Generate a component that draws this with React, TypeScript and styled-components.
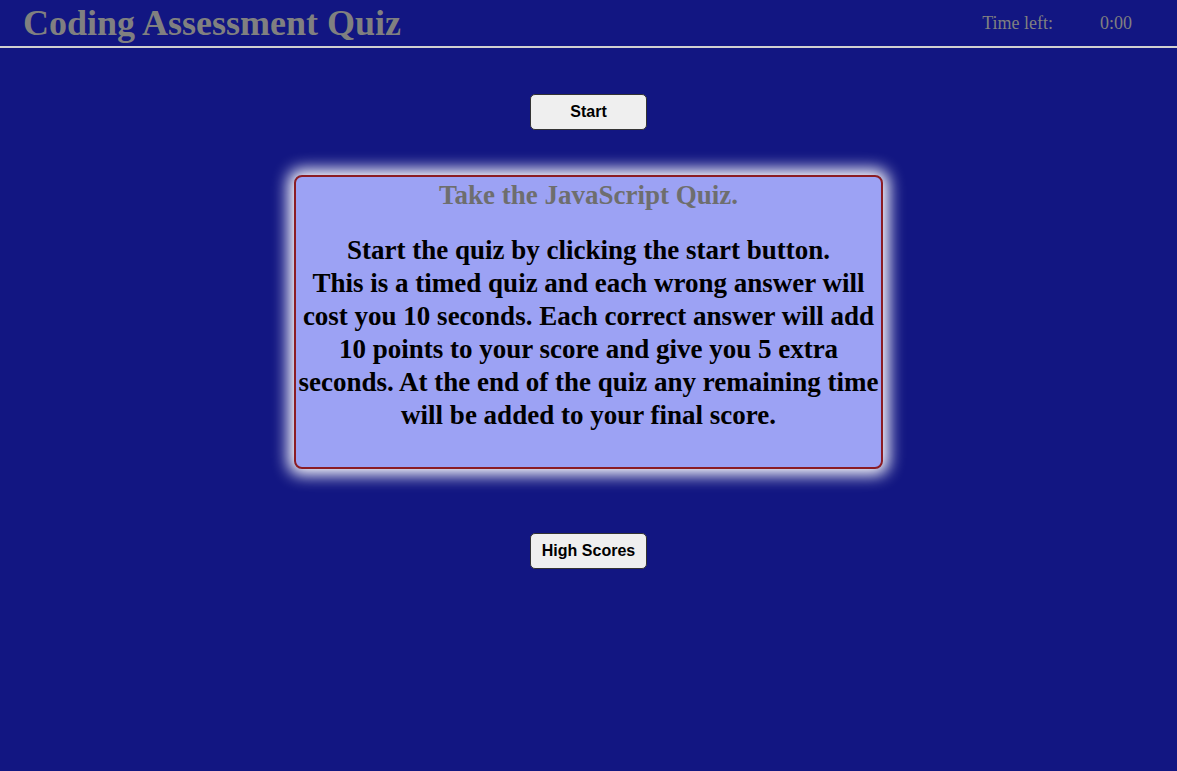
import React from "react";
import styled, { createGlobalStyle } from "styled-components";

const Global = createGlobalStyle`
  html, body { margin: 0; padding: 0; background: #121682; }
  body { font-family: "Liberation Serif", "Times New Roman", serif; }
`;

const Page = styled.div`
  min-height: 771px;
  background: #121682;
  display: flex;
  flex-direction: column;
`;

const Header = styled.header`
  height: 46px;
  display: flex;
  align-items: center;
  justify-content: space-between;
  padding: 0 45px 0 23px;
  border-bottom: 2px solid #d0d0d0;
`;

const Title = styled.h1`
  margin: 0;
  font-family: "Liberation Serif", serif;
  font-size: 36px;
  font-weight: bold;
  color: #808080;
  line-height: 46px;
`;

const Timer = styled.div`
  display: flex;
  gap: 47px;
  color: #808080;
  font-size: 18px;
  font-family: "Liberation Serif", serif;
`;

const Main = styled.main`
  display: flex;
  flex-direction: column;
  align-items: center;
`;

const Button = styled.button<{ $top: number }>`
  margin-top: ${(p) => p.$top}px;
  width: 117px;
  height: 36px;
  background: #efefef;
  border: 1px solid #333;
  border-radius: 5px;
  font-family: "Liberation Sans", Arial, sans-serif;
  font-weight: bold;
  font-size: 16px;
  color: #000;
`;

const Card = styled.section`
  margin-top: 45px;
  box-sizing: border-box;
  width: 589px;
  height: 294px;
  background: #9ca2f4;
  border: 2px solid #8b1c24;
  border-radius: 8px;
  box-shadow: 0 0 16px 6px #ffffff;
  text-align: center;
  padding: 2px 2px 0;
`;

const CardTitle = styled.h2`
  margin: 0;
  font-size: 27px;
  line-height: 32px;
  color: #6e6e6e;
  font-weight: bold;
`;

const CardText = styled.p`
  margin: 23px 0 0;
  font-size: 27px;
  line-height: 33px;
  font-weight: bold;
  color: #000;
`;

export default function App() {
  return (
    <Page>
      <Global />
      <Header>
        <Title>Coding Assessment Quiz</Title>
        <Timer>
          <span>Time left:</span>
          <span>0:00</span>
        </Timer>
      </Header>
      <Main>
        <Button $top={46}>Start</Button>
        <Card>
          <CardTitle>Take the JavaScript Quiz.</CardTitle>
          <CardText>
            Start the quiz by clicking the start button.
            <br />
            This is a timed quiz and each wrong answer will cost you 10 seconds. Each correct answer
            will add 10 points to your score and give you 5 extra seconds. At the end of the quiz any
            remaining time will be added to your final score.
          </CardText>
        </Card>
        <Button $top={64}>High Scores</Button>
      </Main>
    </Page>
  );
}
